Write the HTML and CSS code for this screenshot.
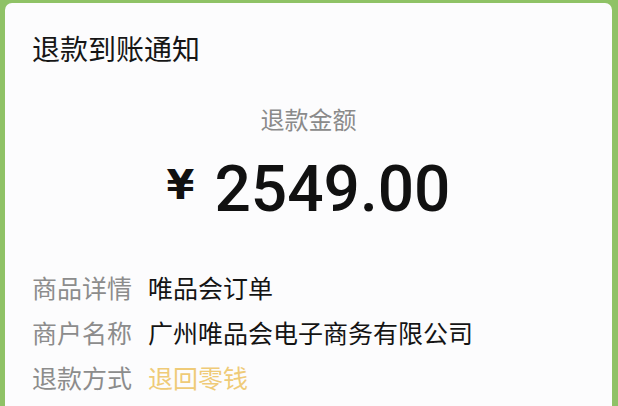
FILE: index.html
```html
<!DOCTYPE html>
<html lang="zh-CN">
<head>
  <meta charset="UTF-8" />
  <meta name="viewport" content="width=device-width, initial-scale=1.0"/>
  <title>退款到账通知</title>
  <link rel="stylesheet" href="styles.css">
</head>
<body>
  <div class="card">
    <h1 class="title">退款到账通知</h1>

    <div class="amount-box">
      <div class="amount-label">退款金额</div>
      <div class="amount">
        <span class="currency">¥</span>
        <span class="value">2549.00</span>
      </div>
    </div>

    <div class="details">
      <div class="row">
        <span class="label">商品详情</span>
        <span class="text">唯品会订单</span>
      </div>
      <div class="row">
        <span class="label">商户名称</span>
        <span class="text">广州唯品会电子商务有限公司</span>
      </div>
      <div class="row">
        <span class="label">退款方式</span>
        <span class="text gold">退回零钱</span>
      </div>
    </div>
  </div>
</body>
</html>
```

FILE: styles.css
```css
body {
  font-family: "Noto Sans CJK SC", "Noto Sans", sans-serif;
  margin: 0;
  padding: 3px 6px 0 5px;
  background-color: #8fc266;
  height: 406px;
  box-sizing: border-box;
  overflow: hidden;
}
.card {
  background-color: #fcfcfd;
  border-radius: 7px 7px 0 0;
  height: 100%;
  padding: 26px 27px 0 27px;
  box-sizing: border-box;
}
.title {
  margin: 0;
  font-size: 28px;
  font-weight: 400;
  line-height: 38px;
  color: #161616;
}
.amount-box {
  text-align: center;
  margin-top: 36px;
}
.amount-label {
  font-size: 24px;
  line-height: 32px;
  color: #8a8a8a;
}
.amount {
  display: flex;
  justify-content: center;
  align-items: flex-start;
  gap: 20px;
  margin-top: 20px;
  color: #111;
}
.currency {
  font-family: "DejaVu Sans", sans-serif;
  font-size: 40px;
  font-weight: 700;
  line-height: 48px;
  margin-top: 6px;
}
.value {
  font-family: Roboto, sans-serif;
  font-size: 64px;
  font-weight: 500;
  line-height: 70px;
}
.details {
  margin-top: 45px;
  display: flex;
  flex-direction: column;
  gap: 11px;
}
.row {
  display: flex;
  gap: 16px;
  font-size: 25px;
  line-height: 34px;
}
.label {
  color: #8c8c8c;
}
.text {
  color: #141414;
}
.gold {
  color: #efcb78;
}
```
